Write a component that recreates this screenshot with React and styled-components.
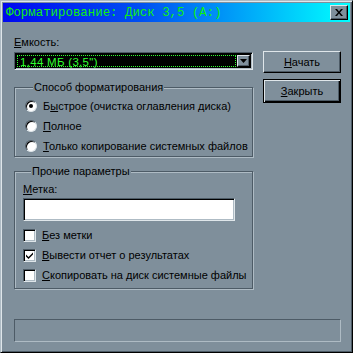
import React from 'react';
import styled, { createGlobalStyle } from 'styled-components';

const FACE = '#7f8f9b';
const LIGHT = '#aebbc4';
const HILITE = '#dfe6ea';
const SHADOW = '#4d5b66';

const GlobalStyle = createGlobalStyle`
  html, body { margin: 0; padding: 0; background: ${FACE}; }
  body {
    font-family: "Liberation Sans", Arial, sans-serif;
    font-size: 11px;
    color: #000;
  }
  * { box-sizing: border-box; }
`;

const Window = styled.div`
  width: 353px;
  height: 353px;
  background: ${FACE};
  border: 1px solid;
  border-color: ${LIGHT} #000 #000 ${LIGHT};
  box-shadow: inset 1px 1px 0 ${HILITE}, inset -1px -1px 0 ${SHADOW};
  padding: 2px;
  display: flex;
  flex-direction: column;
`;

const TitleBar = styled.div`
  height: 19px;
  display: flex;
  align-items: center;
  justify-content: space-between;
  padding: 0 2px 0 3px;
  background: linear-gradient(90deg, #0008f0 0%, #0050f2 40%, #00ffff 100%);
`;

const Title = styled.span`
  font-family: "Liberation Mono", "Courier New", monospace;
  font-size: 12.4px;
  color: #10f010;
  white-space: nowrap;
`;

const CloseButton = styled.button`
  width: 18px;
  height: 15px;
  padding: 0;
  display: flex;
  align-items: center;
  justify-content: center;
  background: ${FACE};
  border: 1px solid;
  border-color: ${HILITE} #000 #000 ${HILITE};
  box-shadow: inset -1px -1px 0 ${SHADOW};
`;

const Body = styled.div`
  display: grid;
  grid-template-columns: 239px 78px;
  column-gap: 10px;
  padding: 13px 9px 0 11px;
`;

const Column = styled.div`
  display: flex;
  flex-direction: column;
`;

const Label = styled.div`
  line-height: 14px;
  margin-top: ${p => p.$top || 0}px;
`;

const Combo = styled.div`
  margin-top: 3px;
  height: 18px;
  display: flex;
  background: #000;
  border: 1px solid;
  border-color: ${SHADOW} ${HILITE} ${HILITE} ${SHADOW};
  box-shadow: inset 1px 1px 0 #000, inset -1px -1px 0 ${LIGHT};
  padding: 2px;
`;

const Selection = styled.div`
  flex: 1;
  border: 1px dotted #30ff30;
  color: #30ff30;
  font-size: 11.5px;
  line-height: 12px;
  letter-spacing: 0.3px;
  padding-left: 2px;
  margin-right: 1px;
`;

const DropButton = styled.div`
  width: 13px;
  display: flex;
  align-items: center;
  justify-content: center;
  background: ${FACE};
  border: 1px solid;
  border-color: ${HILITE} #000 #000 ${HILITE};
  box-shadow: inset -1px -1px 0 ${SHADOW};
`;

const Group = styled.fieldset`
  margin: ${p => p.$top}px 0 0 0;
  padding: ${p => p.$pad};
  border: 1px solid ${SHADOW};
  box-shadow: inset 1px 1px 0 ${LIGHT}, 1px 1px 0 ${LIGHT};
  min-width: 0;
`;

const Legend = styled.legend`
  margin-left: 8px;
  padding: 0 1px;
  line-height: 14px;
  background: ${FACE};
`;

const OptionRow = styled.div`
  height: 20px;
  margin-top: ${p => p.$top || 0}px;
  display: flex;
  align-items: center;
  gap: 6px;
  white-space: nowrap;
`;

const Caption = styled.span`
  line-height: 14px;
`;

const Radio = styled.span`
  width: 12px;
  height: 12px;
  border-radius: 50%;
  background: #fff;
  border: 1px solid;
  border-color: ${SHADOW} ${HILITE} ${HILITE} ${SHADOW};
  box-shadow: inset 1px 1px 0 #000;
  display: flex;
  align-items: center;
  justify-content: center;
  flex: none;
  &::after {
    content: '';
    width: 4px;
    height: 4px;
    border-radius: 50%;
    background: ${p => (p.$on ? '#000' : 'transparent')};
  }
`;

const Check = styled.span`
  width: 13px;
  height: 13px;
  background: #fff;
  border: 1px solid;
  border-color: ${SHADOW} ${HILITE} ${HILITE} ${SHADOW};
  box-shadow: inset 1px 1px 0 #000, inset -1px -1px 0 ${LIGHT};
  display: flex;
  align-items: center;
  justify-content: center;
  flex: none;
`;

const TextInput = styled.div`
  margin-top: 2px;
  width: 212px;
  height: 23px;
  background: #fff;
  border: 1px solid;
  border-color: ${SHADOW} ${HILITE} ${HILITE} ${SHADOW};
  box-shadow: inset 1px 1px 0 #000, inset -1px -1px 0 ${LIGHT};
`;

const Button = styled.button`
  width: 78px;
  height: ${p => (p.$default ? 24 : 22)}px;
  margin-top: ${p => p.$top}px;
  padding: 0;
  font: inherit;
  color: #000;
  background: ${FACE};
  border: 1px solid;
  border-color: ${p => (p.$default ? '#000' : `${HILITE} #000 #000 ${HILITE}`)};
  box-shadow: ${p =>
    p.$default
      ? `inset 1px 1px 0 ${HILITE}, inset -1px -1px 0 #000, inset -2px -2px 0 ${SHADOW}`
      : `inset -1px -1px 0 ${SHADOW}`};
`;

const StatusBar = styled.div`
  margin: auto 9px 8px 11px;
  height: 23px;
  border: 1px solid;
  border-color: ${SHADOW} ${LIGHT} ${LIGHT} ${SHADOW};
`;

export default function App() {
  return (
    <>
      <GlobalStyle />
      <Window>
        <TitleBar>
          <Title>Форматирование: Диск 3,5 (A:)</Title>
          <CloseButton>
            <svg width="8" height="7" viewBox="0 0 8 7">
              <path d="M0 0h2l2 2.5L6 0h2L5 3.5 8 7H6L4 4.5 2 7H0l3-3.5z" fill="#000" />
            </svg>
          </CloseButton>
        </TitleBar>
        <Body>
          <Column>
            <Label><u>Е</u>мкость:</Label>
            <Combo>
              <Selection>1,44 МБ (3,5")</Selection>
              <DropButton>
                <svg width="7" height="4" viewBox="0 0 7 4">
                  <path d="M0 0h7L3.5 4z" fill="#000" />
                </svg>
              </DropButton>
            </Combo>
            <Group $top={10} $pad="2px 8px 0 10px">
              <Legend>Способ форматирования</Legend>
              <OptionRow><Radio $on /><Caption>Б<u>ы</u>строе (очистка оглавления диска)</Caption></OptionRow>
              <OptionRow><Radio /><Caption><u>П</u>олное</Caption></OptionRow>
              <OptionRow><Radio /><Caption><u>Т</u>олько копирование системных файлов</Caption></OptionRow>
            </Group>
            <Group $top={7} $pad="0 8px 3px 8px">
              <Legend>Прочие параметры</Legend>
              <Label $top={4}><u>М</u>етка:</Label>
              <TextInput />
              <OptionRow $top={4}><Check /><Caption><u>Б</u>ез метки</Caption></OptionRow>
              <OptionRow>
                <Check>
                  <svg width="7" height="7" viewBox="0 0 7 7">
                    <path d="M0 2.5l2.5 2.5L7 0.5v2L2.5 7 0 4.5z" fill="#000" />
                  </svg>
                </Check>
                <Caption><u>В</u>ывести отчет о результатах</Caption>
              </OptionRow>
              <OptionRow><Check /><Caption><u>С</u>копировать на диск системные файлы</Caption></OptionRow>
            </Group>
          </Column>
          <Column>
            <Button $top={16}><u>Н</u>ачать</Button>
            <Button $top={6} $default><u>З</u>акрыть</Button>
          </Column>
        </Body>
        <StatusBar />
      </Window>
    </>
  );
}
